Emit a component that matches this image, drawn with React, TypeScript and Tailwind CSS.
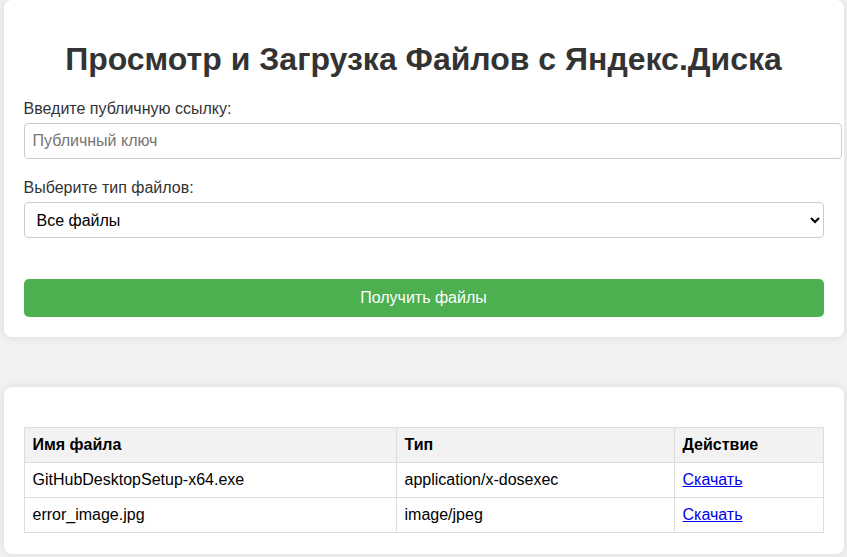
import { useState } from 'react';

const files = [
  { name: 'GitHubDesktopSetup-x64.exe', type: 'application/x-dosexec' },
  { name: 'error_image.jpg', type: 'image/jpeg' },
];

export default function App() {
  const [publicKey, setPublicKey] = useState('');
  const [fileType, setFileType] = useState('all');

  return (
    <div className="min-h-screen bg-[#f2f2f2] font-['Liberation_Sans',Arial,sans-serif] text-[16px] text-[#333]">
      <div className="mx-auto w-[840px] rounded-lg bg-white p-5 shadow-[0_0_10px_rgba(0,0,0,0.1)]">
        <h1 className="mt-[21px] mb-[22px] text-center text-[32px] font-bold leading-[37px] text-[#333]">
          Просмотр и Загрузка Файлов с Яндекс.Диска
        </h1>

        <div className="mb-5">
          <label className="mb-[5px] block leading-[18px]">Введите публичную ссылку:</label>
          <input
            type="text"
            value={publicKey}
            onChange={(e) => setPublicKey(e.target.value)}
            placeholder="Публичный ключ"
            className="box-content block h-[18px] w-[800px] rounded border border-[#ccc] p-2 leading-[18px] text-black placeholder:text-[#757575] outline-none"
          />
        </div>

        <div>
          <label className="mb-[5px] block leading-[18px]">Выберите тип файлов:</label>
          <select
            value={fileType}
            onChange={(e) => setFileType(e.target.value)}
            className="block h-9 w-full rounded border border-[#ccc] bg-white px-2 text-black outline-none"
          >
            <option value="all">Все файлы</option>
            <option value="image">Изображения</option>
            <option value="document">Документы</option>
          </select>
        </div>

        <button className="mt-[41px] block h-[38px] w-full rounded-[5px] bg-[#4caf50] text-white">
          Получить файлы
        </button>
      </div>

      <div className="mx-auto mt-[50px] w-[840px] rounded-lg bg-white p-5 pb-[21px] shadow-[0_0_10px_rgba(0,0,0,0.1)]">
        <table className="mt-5 w-[800px] border-collapse text-left text-black">
          <thead>
            <tr className="bg-[#f2f2f2]">
              <th className="w-[372px] border border-[#ddd] px-2 py-2 font-bold leading-[18px]">Имя файла</th>
              <th className="w-[278px] border border-[#ddd] px-2 py-2 font-bold leading-[18px]">Тип</th>
              <th className="border border-[#ddd] px-2 py-2 font-bold leading-[18px]">Действие</th>
            </tr>
          </thead>
          <tbody>
            {files.map((f) => (
              <tr key={f.name}>
                <td className="border border-[#ddd] px-2 py-2 leading-[18px]">{f.name}</td>
                <td className="border border-[#ddd] px-2 py-2 leading-[18px]">{f.type}</td>
                <td className="border border-[#ddd] px-2 py-2 leading-[18px]">
                  <a href="#" className="text-[#0000ee] underline">
                    Скачать
                  </a>
                </td>
              </tr>
            ))}
          </tbody>
        </table>
      </div>
    </div>
  );
}
